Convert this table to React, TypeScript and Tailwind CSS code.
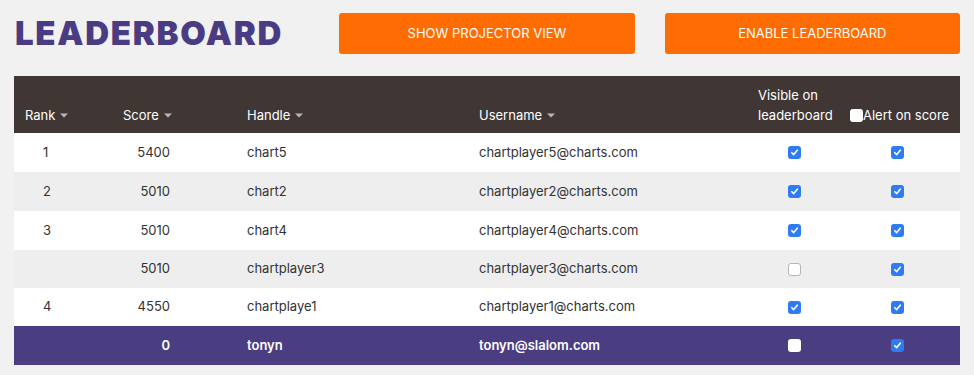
const rows = [
  { rank: "1", score: "5400", handle: "chart5", user: "chartplayer5@charts.com", visible: true, alert: true, h: "h-[39px]" },
  { rank: "2", score: "5010", handle: "chart2", user: "chartplayer2@charts.com", visible: true, alert: true, h: "h-[39px]" },
  { rank: "3", score: "5010", handle: "chart4", user: "chartplayer4@charts.com", visible: true, alert: true, h: "h-[39px]" },
  { rank: "", score: "5010", handle: "chartplayer3", user: "chartplayer3@charts.com", visible: false, alert: true, h: "h-[38px]" },
  { rank: "4", score: "4550", handle: "chartplaye1", user: "chartplayer1@charts.com", visible: true, alert: true, h: "h-[38px]" },
];

const grid = "grid grid-cols-[97px_124px_232px_279px_100px_1fr]";

function Caret() {
  return (
    <svg width="8" height="5" viewBox="0 0 8 5" className="ml-[5px] inline-block">
      <path d="M0 0.5h8L4 4.5z" fill="#b9b4b3" />
    </svg>
  );
}

function Check({ on, header }: { on: boolean; header?: boolean }) {
  if (!on) {
    return (
      <span
        className={
          "inline-block h-[13px] w-[13px] rounded-[3px] bg-white " +
          (header ? "" : "border border-[#b5b5b5]")
        }
      />
    );
  }
  return (
    <span className="inline-flex h-[13px] w-[13px] items-center justify-center rounded-[3px] bg-[#2f7bf5]">
      <svg width="9" height="9" viewBox="0 0 9 9">
        <path d="M1.8 4.7l1.9 1.9 3.6-4.4" fill="none" stroke="white" strokeWidth="1.6" strokeLinecap="round" strokeLinejoin="round" />
      </svg>
    </span>
  );
}

function Row({ r, i }: { r: (typeof rows)[number]; i: number }) {
  return (
    <div className={grid + " items-center " + r.h + " " + (i % 2 ? "bg-[#eeeeee]" : "bg-white")}>
      <div className="pl-[29px]">{r.rank}</div>
      <div className="w-[59px] text-right">{r.score}</div>
      <div className="pl-[12px]">{r.handle}</div>
      <div className="pl-[12px]">{r.user}</div>
      <div className="flex pl-[42px]">
        <Check on={r.visible} />
      </div>
      <div className="flex pl-[45px]">
        <Check on={r.alert} />
      </div>
    </div>
  );
}

export default function App() {
  return (
    <div className="min-h-[375px] w-[974px] bg-[#f1f1f1] px-[14px] pt-[13px] font-['Inter',sans-serif] text-[13px] text-[#333]">
      <div className="flex items-center">
        <h1 className="w-[326px] pl-[1px] text-[33px] font-black leading-none tracking-[1.7px] text-[#4a3c82]">
          LEADERBOARD
        </h1>
        <button className="h-[41px] w-[296px] rounded-[3px] bg-[#ff6c02] text-[13px] text-white">
          SHOW PROJECTOR VIEW
        </button>
        <button className="ml-[30px] h-[41px] w-[296px] rounded-[3px] bg-[#ff6c02] text-[13px] text-white">
          ENABLE LEADERBOARD
        </button>
      </div>

      <div className="mt-[22px]">
        <div className={grid + " h-[57px] items-end bg-[#403735] pb-[8px] leading-[20px] text-white"}>
          <div className="flex items-center pl-[11px]">
            Rank
            <Caret />
          </div>
          <div className="flex items-center pl-[12px]">
            Score
            <Caret />
          </div>
          <div className="flex items-center pl-[12px]">
            Handle
            <Caret />
          </div>
          <div className="flex items-center pl-[12px]">
            Username
            <Caret />
          </div>
          <div className="pl-[12px]">
            Visible on
            <br />
            leaderboard
          </div>
          <div className="flex items-center pl-[4px]">
            <Check on={false} header />
            Alert on score
          </div>
        </div>
        {rows.map((r, i) => (
          <Row key={i} r={r} i={i} />
        ))}
        <div className={grid + " h-[39px] items-center bg-[#4a3d82] font-semibold text-white"}>
          <div />
          <div className="w-[59px] text-right">0</div>
          <div className="pl-[12px]">tonyn</div>
          <div className="pl-[12px]">tonyn@slalom.com</div>
          <div className="flex pl-[42px]">
            <Check on={false} header />
          </div>
          <div className="flex pl-[45px]">
            <Check on />
          </div>
        </div>
      </div>
    </div>
  );
}
